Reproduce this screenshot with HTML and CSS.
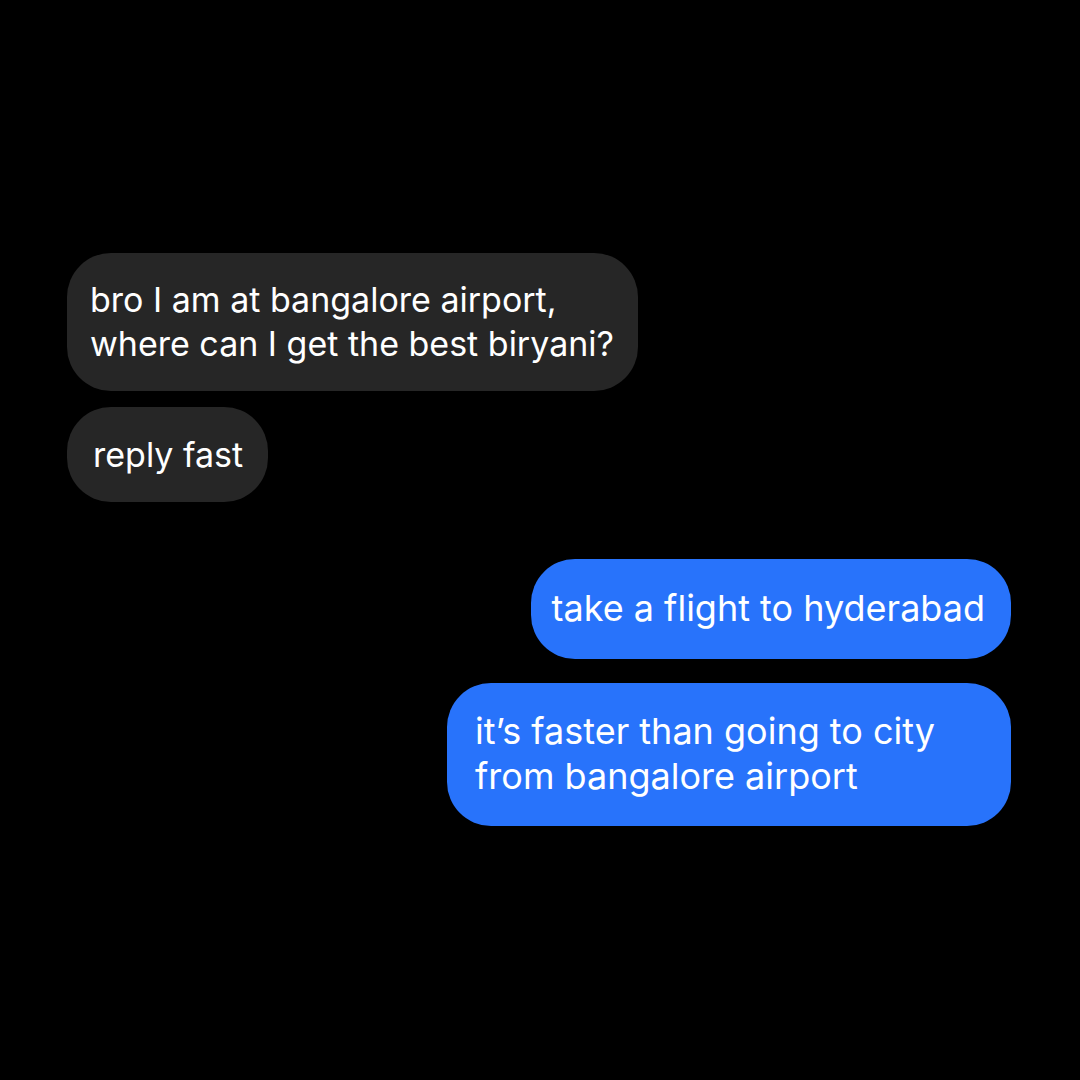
FILE: index.html
```html
<!DOCTYPE html>
<html lang="en">
<head>
<meta charset="utf-8">
<title>Chat</title>
<link rel="stylesheet" href="styles.css">
</head>
<body>
<main class="chat">
  <section class="group group-in">
    <div class="bubble in b1">bro I am at bangalore airport,<br>where can I get the best biryani?</div>
    <div class="bubble in b2">reply fast</div>
  </section>
  <section class="group group-out">
    <div class="bubble out b3">take a flight to hyderabad</div>
    <div class="bubble out b4">it’s faster than going to city<br>from bangalore airport</div>
  </section>
</main>
</body>
</html>
```
FILE: styles.css
```css
html, body {
  margin: 0;
  padding: 0;
  background: #000;
}
body {
  width: 1080px;
  height: 1080px;
  overflow: hidden;
  font-family: Inter, "Noto Sans", sans-serif;
  color: #fff;
}
.chat {
  display: flex;
  flex-direction: column;
  padding: 253px 69px 0 67px;
  gap: 57px;
}
.group {
  display: flex;
  flex-direction: column;
}
.group-in {
  align-items: flex-start;
  gap: 16px;
}
.group-out {
  align-items: flex-end;
  gap: 24px;
}
.bubble {
  border-radius: 44px;
  white-space: nowrap;
}
.in {
  background: #262626;
  font-size: 34px;
  line-height: 44px;
}
.out {
  background: #2873fb;
  font-size: 36px;
  line-height: 45px;
}
.b1 {
  padding: 25px 24px 25px 23px;
}
.b2 {
  padding: 26px 25px 25px 26px;
}
.b3 {
  padding: 27px 26px 28px 21px;
}
.b4 {
  padding: 26px 76px 27px 28px;
}
```
